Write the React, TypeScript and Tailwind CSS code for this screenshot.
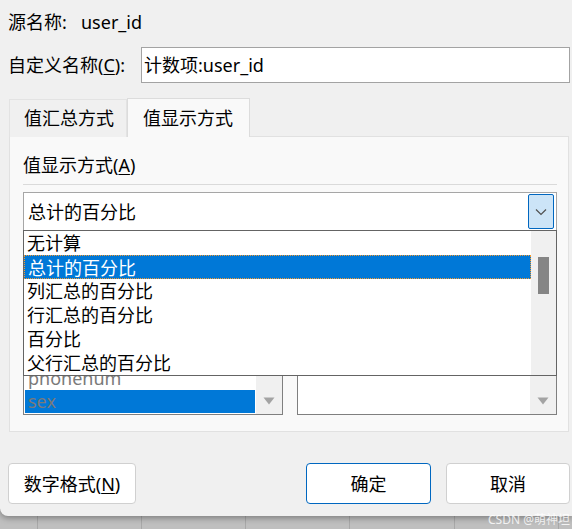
import React from "react";

const listItems = ["无计算", "总计的百分比", "列汇总的百分比", "行汇总的百分比", "百分比", "父行汇总的百分比"];

function DownArrow() {
    return (
        <svg width="12" height="8" viewBox="0 0 12 8">
            <polygon points="0.5,0.5 11.5,0.5 6,7.5" fill="#a3a3a3" />
        </svg>
    );
}

function Listbox({ rows, className }: { rows: { text: string; selected?: boolean }[]; className?: string }) {
    return (
        <div className={`flex h-[174px] border border-[#7f7f7f] bg-white ${className ?? ""}`}>
            <div className="flex flex-1 flex-col justify-end overflow-hidden p-px">
                {rows.map((r) => (
                    <div
                        key={r.text}
                        className={`h-[23px] shrink-0 pl-[3px] text-[18px] leading-[23px] text-[#7a7a7a] ${r.selected ? "bg-[#0078d7]" : ""}`}
                    >
                        {r.text}
                    </div>
                ))}
            </div>
            <div className="flex w-[26px] flex-col items-center justify-end bg-[#f0f0f0] pb-[9px]">
                <DownArrow />
            </div>
        </div>
    );
}

export default function App() {
    return (
        <div className="relative h-[529px] w-[572px] overflow-hidden bg-[#bfbfbf] font-['Noto_Sans','Noto_Sans_CJK_SC',sans-serif] text-black">
            {/* Dialog */}
            <div className="relative z-10 h-[516px] rounded-bl-[8px] bg-[#f0f0f0] pl-2 pr-[2px] pt-[10px] shadow-[0_2px_6px_rgba(0,0,0,0.35)]">
                {/* Source name */}
                <div className="flex h-[24px] text-[18px] leading-[24px]">
                    <span className="w-[73px]">源名称:</span>
                    <span>user_id</span>
                </div>

                {/* Custom name */}
                <div className="mt-[13px] flex h-[36px] items-center text-[18px]">
                    <span className="w-[133px] leading-[24px]">
                        自定义名称(<span className="underline underline-offset-2">C</span>):
                    </span>
                    <div className="flex h-[36px] flex-1 items-center border border-[#a3a3a3] bg-white pl-[2px] leading-[24px]">
                        计数项:user_id
                    </div>
                </div>

                {/* Tabs */}
                <div className="mt-[15px] flex items-end pl-px text-[18px]">
                    <div className="-mb-px h-[38px] w-[118px] border border-b-0 border-[#e3e3e3] bg-[#f0f0f0] pl-[14px] leading-[36px]">
                        值汇总方式
                    </div>
                    <div className="relative z-10 -mb-px h-[39px] w-[123px] border border-b-0 border-[#dcdcdc] bg-[#f9f9f9] pl-[15px] leading-[38px]">
                        值显示方式
                    </div>
                </div>

                {/* Panel */}
                <div className="ml-px mr-[1px] border border-[#e1e1e1] bg-[#f9f9f9] pb-[16px] pl-[13px] pr-[11px] pt-[16px]">
                    <div className="h-[24px] text-[18px] leading-[24px]">
                        值显示方式(<span className="underline underline-offset-2">A</span>)
                    </div>
                    <div className="mt-[7px] h-px bg-[#dadada]" />

                    {/* Combo */}
                    <div className="relative mt-[7px]">
                        <div className="flex h-[39px] items-center border border-[#a6a6a6] bg-white pl-[4px] pr-[2px]">
                            <span className="flex-1 text-[18px] leading-[24px]">总计的百分比</span>
                            <div className="flex h-[35px] w-[26px] items-center justify-center rounded-[2px] border border-[#0067c0] bg-[#cce4f7]">
                                <svg width="12" height="8" viewBox="0 0 12 8">
                                    <polyline points="1,1.5 6,6.5 11,1.5" fill="none" stroke="#505050" strokeWidth="1.2" />
                                </svg>
                            </div>
                        </div>

                        {/* Dropdown list */}
                        <div className="absolute left-0 right-0 top-[38px] z-20 flex h-[146px] border border-[#646464] bg-white">
                            <div className="flex-1">
                                {listItems.map((t) => (
                                    <div
                                        key={t}
                                        className={`h-[24px] pl-[3px] text-[18px] leading-[24px] ${
                                            t === "总计的百分比"
                                                ? "border border-dotted border-[#f59a2e] bg-[#0078d7] pl-[2px] leading-[22px] text-white"
                                                : ""
                                        }`}
                                    >
                                        {t}
                                    </div>
                                ))}
                            </div>
                            <div className="w-[25px] bg-[#f0f0f0] pl-[7px] pt-[26px]">
                                <div className="h-[37px] w-[11px] bg-[#858585]" />
                            </div>
                        </div>
                    </div>

                    {/* Field lists behind the dropdown */}
                    <div className="mt-[10px] flex gap-[14px]">
                        <Listbox
                            className="w-[260px]"
                            rows={[
                                { text: "user_id" },
                                { text: "name" },
                                { text: "phonenum" },
                                { text: "sex", selected: true },
                            ]}
                        />
                        <Listbox className="flex-1" rows={[]} />
                    </div>
                </div>

                {/* Buttons */}
                <div className="mt-[31px] flex text-[18px]">
                    <button className="h-[41px] w-[128px] rounded-[4px] border border-[#d0d0d0] bg-white leading-[24px]">
                        数字格式(<span className="underline underline-offset-2">N</span>)
                    </button>
                    <button className="ml-[170px] h-[41px] w-[125px] rounded-[4px] border border-[#0067c0] bg-white leading-[24px]">
                        确定
                    </button>
                    <button className="ml-[15px] h-[41px] w-[124px] rounded-[4px] border border-[#d0d0d0] bg-white leading-[24px]">
                        取消
                    </button>
                </div>
            </div>

            {/* Sheet grid below the dialog */}
            <div className="flex h-[13px]">
                <div className="w-[38px] border-r border-[#a8a8a8]" />
                <div className="w-[104px] border-r border-[#a8a8a8]" />
                <div className="w-[104px] border-r border-[#a8a8a8]" />
                <div className="w-[104px] border-r border-[#a8a8a8]" />
                <div className="w-[105px] border-r border-[#a8a8a8]" />
                <div className="w-[104px] border-r border-[#a8a8a8]" />
            </div>

            {/* Watermark */}
            <div className="absolute bottom-[2px] right-[2px] z-20 text-[12px] leading-[14px] text-white/80">
                CSDN @萌神坦
            </div>
        </div>
    );
}
